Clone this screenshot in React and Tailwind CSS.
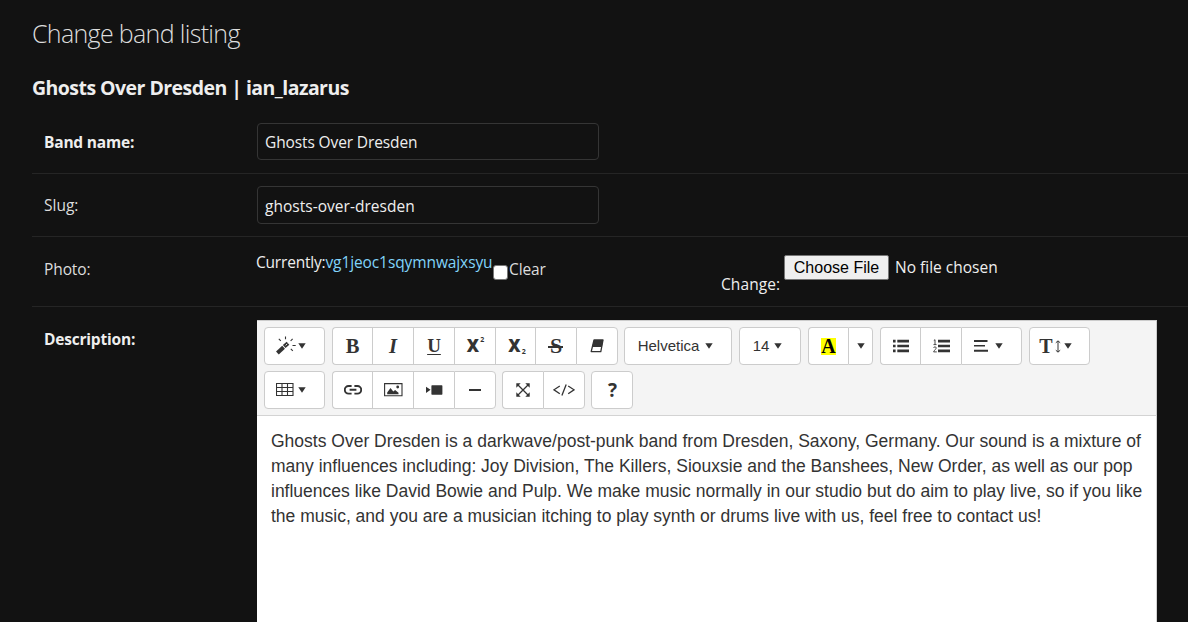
const ARIAL = "font-['Liberation_Sans',Arial,sans-serif]";
const SERIF = "font-['Liberation_Serif',serif]";

function Caret({ className = "" }) {
  return (
    <svg className={className} width="8" height="6" viewBox="0 0 8 6">
      <path d="M0.3 0.3h7.4L4 5.7z" fill="#333" />
    </svg>
  );
}

function Btn({ className = "", children }) {
  return (
    <button
      type="button"
      className={
        "flex h-[38px] items-center justify-center border border-r-0 border-[#ccc] bg-white text-[#333] first:rounded-l-[4px] last:rounded-r-[4px] last:border-r " +
        className
      }
    >
      {children}
    </button>
  );
}

function Group({ children }) {
  return <div className="flex">{children}</div>;
}

function Magic() {
  return (
    <svg width="20" height="20" viewBox="0 0 20 20" fill="none" stroke="#333">
      <path d="M1.4 17L7.6 11.2" strokeWidth="4" />
      <path d="M8.2 10.6L12 7.2" strokeWidth="4" />
      <path d="M9.6 9.4L11.2 7.9" stroke="#fff" strokeWidth="0.9" />
      <path d="M9.5 0.5v2.8M2.8 2.8l2 2M16.6 2.8l-2 2.2M16.5 9.5h3.2M14.8 12.8l2 2" strokeWidth="1.1" />
    </svg>
  );
}

function Eraser() {
  return (
    <svg width="14" height="14" viewBox="0 0 14 14">
      <path d="M4 1h9L10.8 12.6H1.2z" fill="none" stroke="#333" strokeWidth="1.3" strokeLinejoin="round" />
      <path d="M4 1h9.2l-1.3 6.9H2.1z" fill="#333" />
    </svg>
  );
}

function Bullets() {
  return (
    <svg width="16" height="14" viewBox="0 0 16 14" fill="#333">
      <path d="M0 0.8h2.6v2.6H0zM4.3 0.8H16v2.6H4.3zM0 5.7h2.6v2.6H0zM4.3 5.7H16v2.6H4.3zM0 10.6h2.6v2.6H0zM4.3 10.6H16v2.6H4.3z" />
    </svg>
  );
}

function Numbers() {
  return (
    <svg width="17" height="14" viewBox="0 0 17 14" fill="#333">
      <path d="M5 0.8h12v2.6H5zM5 5.7h12v2.6H5zM5 10.6h12v2.6H5z" />
      <path d="M0.8 1.6L2 0.7V5.4M0.5 5.6h3M0.6 8.9c.2-1.4 2.6-1.4 2.6 0 0 1.2-2 2.3-2.6 4H3.8" fill="none" stroke="#333" strokeWidth="0.9" />
    </svg>
  );
}

function Align() {
  return (
    <svg width="14" height="12" viewBox="0 0 14 12" fill="#333">
      <path d="M0 0h13.5v2H0zM0 5h11v1.6H0zM0 9.7h14v2H0z" />
    </svg>
  );
}

function Table() {
  return (
    <svg width="18" height="14" viewBox="0 0 18 14" fill="none" stroke="#333">
      <path d="M0.5 0.5h16.5v12h-16.5zM0.5 4.5h16.5M0.5 8.5h16.5M6 0.5v12M11.5 0.5v12" strokeWidth="1.1" />
    </svg>
  );
}

function Link() {
  return (
    <svg width="18" height="10" viewBox="0 0 18 10" fill="none" stroke="#333" strokeWidth="1.9">
      <path d="M7.6 1H4.6a3.8 3.8 0 0 0 0 7.6h3M10.4 1h3a3.8 3.8 0 0 1 0 7.6h-3M5.6 4.8h6.8" />
    </svg>
  );
}

function Picture() {
  return (
    <svg width="19" height="14" viewBox="0 0 19 14">
      <path d="M0.6 0.6h17.4v12.2H0.6z" fill="none" stroke="#333" strokeWidth="1.1" />
      <path d="M3.2 11.2V9.6L6.5 5l2.8 3.6 1.8-1.7 3.4 2.9v1.4z" fill="#333" />
      <circle cx="13.7" cy="4" r="1.4" fill="#333" />
    </svg>
  );
}

function Video() {
  return (
    <svg width="17" height="10" viewBox="0 0 17 10" fill="#333">
      <path d="M0 1.8L4.6 4.7 0 8zM5.4 0.9q0-.6.6-.6h9.8q.6 0 .6.6v8.2q0 .6-.6.6H6q-.6 0-.6-.6z" />
    </svg>
  );
}

function Expand() {
  return (
    <svg width="14" height="14" viewBox="0 0 14 14">
      <path d="M1.5 1.5l11 11M12.5 1.5l-11 11" stroke="#333" strokeWidth="1.3" />
      <path d="M0.3 0.3h4.4L0.3 4.7zM13.7 0.3H9.3l4.4 4.4zM0.3 13.7h4.4L0.3 9.3zM13.7 13.7H9.3l4.4-4.4z" fill="#333" />
    </svg>
  );
}

function Code() {
  return (
    <svg width="22" height="12" viewBox="0 0 22 12" fill="none" stroke="#333" strokeWidth="1.3">
      <path d="M6.8 2L1 5.8l5.8 3.9M15.2 2L21 5.8l-5.8 3.9M13.2 0.4L8.9 11.4" />
    </svg>
  );
}

function UpDown() {
  return (
    <svg width="6" height="13" viewBox="0 0 6 13" fill="none" stroke="#333" strokeWidth="1">
      <path d="M3 1v11M0.8 2.8L3 0.8l2.2 2M0.8 10.2L3 12.2l2.2-2" />
    </svg>
  );
}

function Toolbar() {
  return (
    <div className="flex h-[95px] flex-col gap-1.5 border-t border-r border-[#ccc] bg-[#f4f4f4] pt-[6px] pl-[7px]">
      <div className="flex gap-[7px]">
        <Group>
          <Btn className="w-[61px] gap-[2px] pr-[7px]"><Magic /><Caret /></Btn>
        </Group>
        <div className={"flex w-[286px] " + SERIF}>
          <Btn className="w-[40px] text-[20.5px] font-bold">B</Btn>
          <Btn className="w-[41px] text-[20.5px] font-bold italic">I</Btn>
          <Btn className="w-[41px] text-[19px] font-bold underline decoration-1 underline-offset-2">U</Btn>
          <Btn className="w-[41px] gap-px pl-px font-['Open_Sans',sans-serif] text-[17px] font-extrabold">
            <span>X</span><span className="mb-3 text-[7px] font-bold">2</span>
          </Btn>
          <Btn className="w-[40px] gap-px pl-[3px] font-['Open_Sans',sans-serif] text-[17px] font-extrabold">
            <span>X</span><span className="mt-3 text-[7px] font-bold">2</span>
          </Btn>
          <Btn className="w-[41px] text-[22px]">
            <span className="relative font-bold">
              S
              <span className="absolute top-1/2 -left-[1.5px] h-[1.5px] w-[15px] bg-[#333]" />
            </span>
          </Btn>
          <Btn className="w-[42px]"><Eraser /></Btn>
        </div>
        <div className={"-ml-px flex text-[15px] " + ARIAL}>
          <Btn className="w-[108px] gap-[6px] pr-[5px]"><span>Helvetica</span><Caret /></Btn>
        </div>
        <div className={"flex text-[15px] " + ARIAL}>
          <Btn className="w-[62px] gap-[5px] pr-[5px]"><span>14</span><Caret /></Btn>
        </div>
        <Group>
          <Btn className="w-[40px]">
            <span className={"flex h-[17px] w-[15px] items-center justify-center bg-[#ff0] text-[20px] leading-none font-bold text-black " + SERIF}>A</span>
          </Btn>
          <Btn className="w-[25px]"><Caret /></Btn>
        </Group>
        <Group>
          <Btn className="w-[40px]"><Bullets /></Btn>
          <Btn className="w-[41px]"><Numbers /></Btn>
          <Btn className="w-[61px] gap-[7px] pr-[6px]"><Align /><Caret /></Btn>
        </Group>
        <Group>
          <Btn className="w-[61px] gap-[2px] pr-[8px]">
            <span className={"text-[20px] font-bold " + SERIF}>T</span><UpDown /><Caret className="ml-px" />
          </Btn>
        </Group>
      </div>
      <div className="flex gap-[7px]">
        <Group>
          <Btn className="w-[61px] gap-[4px] pr-[7px]"><Table /><Caret /></Btn>
        </Group>
        <Group>
          <Btn className="w-[40px]"><Link /></Btn>
          <Btn className="w-[41px]"><Picture /></Btn>
          <Btn className="w-[41px]"><Video /></Btn>
          <Btn className="w-[42px]"><span className="h-[2px] w-[12px] bg-[#333]" /></Btn>
        </Group>
        <div className="-ml-px flex">
          <Btn className="w-[41px]"><Expand /></Btn>
          <Btn className="w-[42px]"><Code /></Btn>
        </div>
        <div className="-ml-px flex">
          <Btn className="w-[42px] pl-px font-['Open_Sans',sans-serif] text-[19px] font-bold">?</Btn>
        </div>
      </div>
    </div>
  );
}

const LINES = [
  "Ghosts Over Dresden is a darkwave/post-punk band from Dresden, Saxony, Germany. Our sound is a mixture of",
  "many influences including: Joy Division, The Killers, Siouxsie and the Banshees, New Order, as well as our pop",
  "influences like David Bowie and Pulp. We make music normally in our studio but do aim to play live, so if you like",
  "the music, and you are a musician itching to play synth or drums live with us, feel free to contact us!",
];

export default function App() {
  return (
    <div className="h-[622px] w-[1188px] overflow-hidden bg-[#121212] pl-[32px] font-['Open_Sans','Noto_Sans',sans-serif] text-[16px] leading-6 whitespace-nowrap text-[#eee]">
      <h1 className="pt-[15px] text-[25px] leading-[36px] font-light tracking-[-0.67px] text-[#ddd]">Change band listing</h1>
      <h2 className="mt-[23px] h-[36px] text-[19.5px] leading-[28px] font-bold tracking-[-0.55px]">Ghosts Over Dresden | ian_lazarus</h2>

      <div className="flex h-[64px] border-b border-[#252525] pt-[13px] pl-[12px]">
        <label className="w-[213px] pt-[7px] text-[15.5px] font-bold tracking-[-0.2px]">Band name:</label>
        <div className="flex h-[37px] w-[342px] items-center rounded-[4px] border border-[#353535] pt-px pl-[7px] text-[15.5px] tracking-[-0.12px]">Ghosts Over Dresden</div>
      </div>

      <div className="flex h-[63px] border-b border-[#252525] pt-[12px] pl-[12px]">
        <label className="w-[213px] pt-[7px] text-[15.5px] tracking-[0px] text-[#ddd]">Slug:</label>
        <div className="flex h-[38px] w-[342px] items-center rounded-[4px] border border-[#353535] pt-[2px] pl-[7px] text-[15.5px] tracking-[0.03px]">ghosts-over-dresden</div>
      </div>

      <div className="flex h-[70px] border-b border-[#252525] pl-[12px] text-[15.5px] tracking-[-0.1px]">
        <label className="w-[212px] pt-[20px] text-[#ddd]">Photo:</label>
        <div className="flex w-[237px] pt-[13px]">
          <span className="tracking-[-0.2px]">Currently:</span>
          <a className="text-[#81d4fa]">vg1jeoc1sqymnwajxsyu</a>
        </div>
        <div className="flex w-[228px] pt-[20px] text-[#ddd]">
          <span className="mt-[8px] mr-[1px] h-[15px] w-[15px] rounded-[3px] border border-[#767676] bg-white" />
          <span>Clear</span>
        </div>
        <span className="w-[63px] pt-[35px] tracking-[0.1px]">Change:</span>
        <div className="flex pt-[18px]">
          <button type="button" className={"mr-[6px] h-[25px] w-[105px] rounded-[2px] border border-[#767676] bg-[#efefef] text-[16px] leading-none tracking-normal text-black " + ARIAL}>Choose File</button>
          <span className="tracking-[0px]">No file chosen</span>
        </div>
      </div>

      <div className="flex pt-[13px] pl-[12px]">
        <label className="w-[213px] pt-[7px] text-[15.5px] font-bold tracking-[-0.2px]">Description:</label>
        <div className="h-[302px] w-[900px] bg-white">
          <Toolbar />
          <div className={"h-[207px] border-t border-r border-[#d3d3d3] pt-[13px] pl-[14px] text-[17.5px] leading-[25px] text-[#333] " + ARIAL}>
            {LINES.map((line) => (
              <p key={line}>{line}</p>
            ))}
          </div>
        </div>
      </div>
    </div>
  );
}
